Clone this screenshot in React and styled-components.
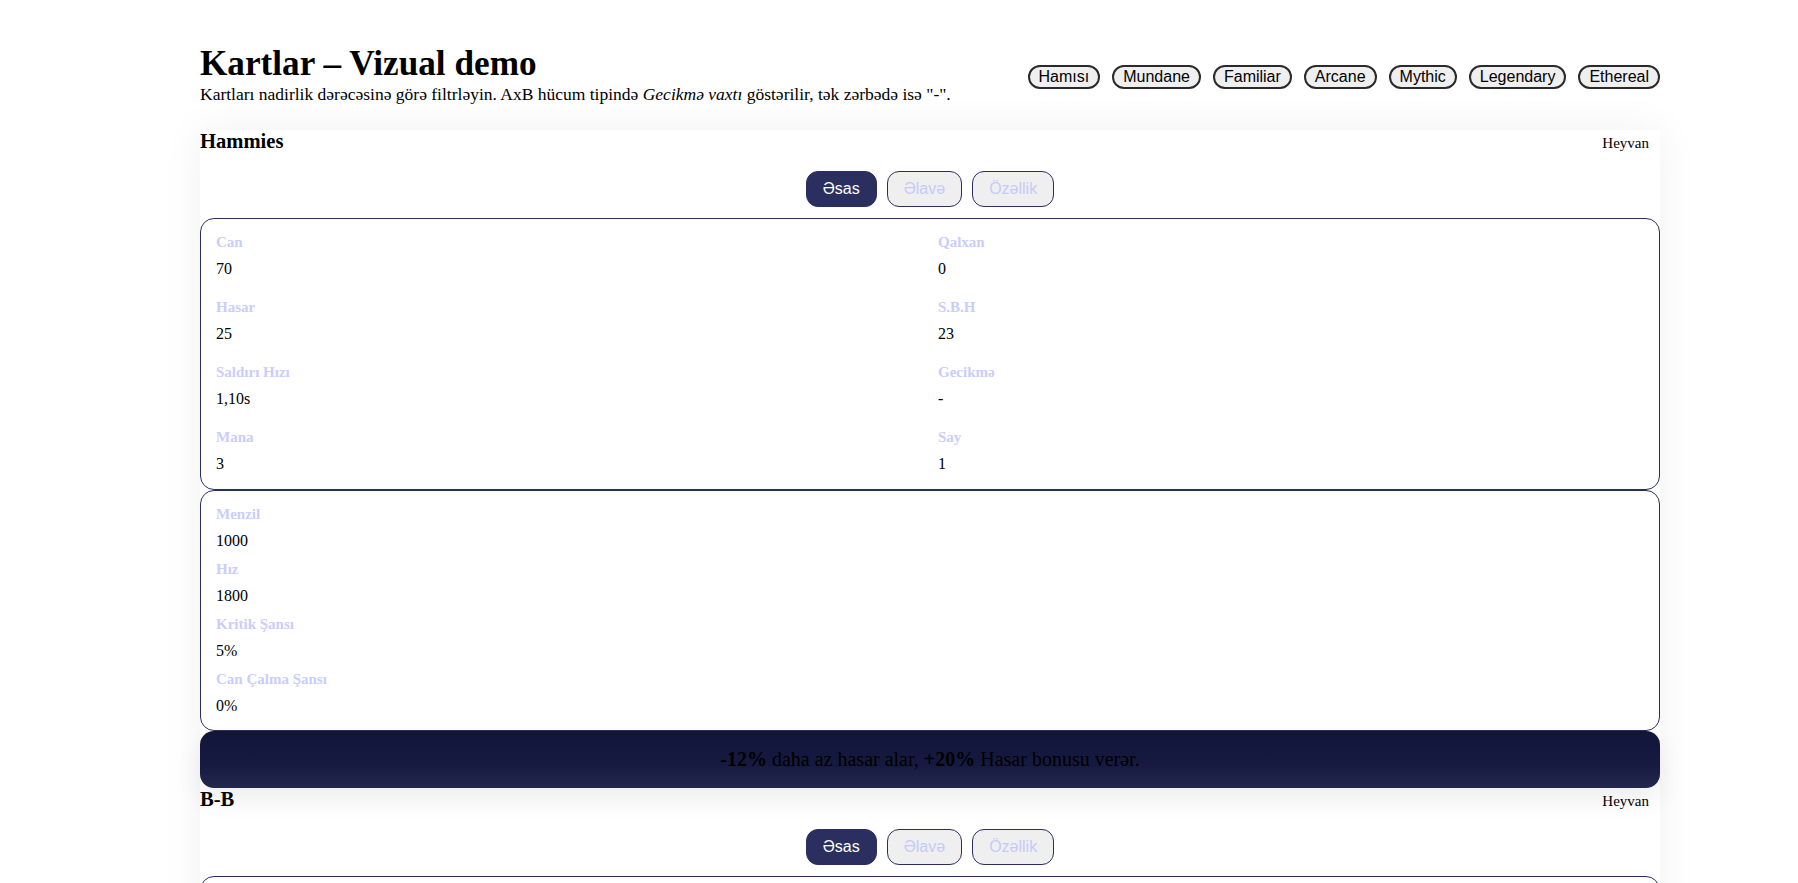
import React, { useState } from 'react';
import styled, { createGlobalStyle, css } from 'styled-components';

const GlobalStyle = createGlobalStyle`
  html, body {
    margin: 0;
    padding: 0;
    background: #fff;
  }
  body {
    font-family: "Liberation Serif", "Times New Roman", serif;
    font-size: 17.6px;
    color: #000;
  }
`;

const navy = '#2b2f60';
const lavender = '#c9cdfb';

const Page = styled.div`
  padding: 44px 0 0 200px;
`;

const Inner = styled.div`
  width: 1460px;
`;

const Header = styled.header`
  display: flex;
  align-items: center;
  justify-content: space-between;
  margin-bottom: 25px;
`;

const Title = styled.h1`
  margin: 0;
  font-size: 35.2px;
  font-weight: 700;
`;

const Lead = styled.p`
  margin: 0;
  font-size: 17.5px;
`;

const Filters = styled.div`
  display: flex;
  gap: 12px;
  margin-top: 4px;
`;

const Pill = styled.button`
  font-family: "Liberation Sans", Arial, sans-serif;
  font-size: 16px;
  line-height: 18px;
  padding: 1px 9px;
  border: 2px solid #2a2a2a;
  border-radius: 12px;
  background: #efefef;
  color: #000;
  cursor: pointer;
`;

const CardList = styled.div`
  background: #fff;
  box-shadow: 0 0 40px rgba(0, 0, 0, 0.06);
`;

const Card = styled.section`
  display: flex;
  flex-direction: column;
`;

const CardHead = styled.div`
  display: flex;
  align-items: baseline;
  justify-content: space-between;
`;

const CardName = styled.h3`
  margin: 0;
  font-size: 20.6px;
  font-weight: 700;
`;

const CardType = styled.span`
  font-size: 15px;
  padding-right: 11px;
`;

const Tabs = styled.div`
  display: flex;
  justify-content: center;
  gap: 10px;
  margin: 18px 0 11px;
`;

const Tab = styled.button`
  font-family: "Liberation Sans", Arial, sans-serif;
  font-size: 16px;
  line-height: 18px;
  padding: 8px 16px;
  border: 1px solid ${navy};
  border-radius: 12px;
  background: #efefef;
  color: #c6cafa;
  cursor: pointer;
  ${(p) => p.$active && css`
    background: ${navy};
    color: #fff;
  `}
`;

const StatBox = styled.div`
  border: 1px solid ${navy};
  border-radius: 14px;
  padding: ${(p) => (p.$grid ? '15px 15px 16px' : '15px 15px 15px')};
  display: ${(p) => (p.$grid ? 'grid' : 'flex')};
  flex-direction: column;
  grid-template-columns: 1fr 1fr;
  gap: ${(p) => (p.$grid ? '21px 16px' : '11px')};
`;

const Stat = styled.div`
  display: flex;
  flex-direction: column;
`;

const StatLabel = styled.span`
  font-size: 15px;
  line-height: 17px;
  font-weight: 700;
  color: ${lavender};
  margin-bottom: 9px;
`;

const StatValue = styled.span`
  font-size: 16px;
  line-height: 18px;
`;

const Bonus = styled.div`
  background: linear-gradient(180deg, #12153a 0%, #171a40 60%, #23274f 100%);
  border-radius: 14px;
  padding: 17px;
  text-align: center;
  font-size: 20px;
  line-height: 23px;
  color: #000;
  box-shadow: 0 12px 26px rgba(0, 0, 0, 0.07);
`;

const rarities = ['Hamısı', 'Mundane', 'Familiar', 'Arcane', 'Mythic', 'Legendary', 'Ethereal'];

const cards = [
  {
    name: 'Hammies',
    type: 'Heyvan',
    main: [
      ['Can', '70'], ['Qalxan', '0'],
      ['Hasar', '25'], ['S.B.H', '23'],
      ['Saldırı Hızı', '1,10s'], ['Gecikmə', '-'],
      ['Mana', '3'], ['Say', '1'],
    ],
    extra: [
      ['Menzil', '1000'], ['Hız', '1800'],
      ['Kritik Şansı', '5%'], ['Can Çalma Şansı', '0%'],
    ],
    bonus: [['-12%', true], [' daha az hasar alar, ', false], ['+20%', true], [' Hasar bonusu verər.', false]],
  },
  {
    name: 'B-B',
    type: 'Heyvan',
    main: [
      ['Can', '120'], ['Qalxan', '0'],
      ['Hasar', '40'], ['S.B.H', '30'],
      ['Saldırı Hızı', '1,30s'], ['Gecikmə', '-'],
      ['Mana', '4'], ['Say', '1'],
    ],
    extra: [
      ['Menzil', '900'], ['Hız', '1600'],
      ['Kritik Şansı', '5%'], ['Can Çalma Şansı', '0%'],
    ],
    bonus: [['+15%', true], [' Can bonusu verər.', false]],
  },
];

const tabNames = ['Əsas', 'Əlavə', 'Özəllik'];

const UnitCard = ({ card }) => {
  const [tab] = useState(0);
  return (
    <Card>
      <CardHead>
        <CardName>{card.name}</CardName>
        <CardType>{card.type}</CardType>
      </CardHead>
      <Tabs>
        {tabNames.map((t, i) => (
          <Tab key={t} $active={i === tab}>{t}</Tab>
        ))}
      </Tabs>
      <StatBox $grid>
        {card.main.map(([label, value]) => (
          <Stat key={label}>
            <StatLabel>{label}</StatLabel>
            <StatValue>{value}</StatValue>
          </Stat>
        ))}
      </StatBox>
      <StatBox>
        {card.extra.map(([label, value]) => (
          <Stat key={label}>
            <StatLabel>{label}</StatLabel>
            <StatValue>{value}</StatValue>
          </Stat>
        ))}
      </StatBox>
      <Bonus>
        {card.bonus.map(([text, strong], i) => (strong ? <b key={i}>{text}</b> : <span key={i}>{text}</span>))}
      </Bonus>
    </Card>
  );
};

const App = () => (
  <>
    <GlobalStyle />
    <Page>
      <Inner>
        <Header>
          <div>
            <Title>Kartlar – Vizual demo</Title>
            <Lead>
              Kartları nadirlik dərəcəsinə görə filtrləyin. AxB hücum tipində <i>Gecikmə vaxtı</i> göstərilir, tək zərbədə isə "-".
            </Lead>
          </div>
          <Filters>
            {rarities.map((r) => (
              <Pill key={r}>{r}</Pill>
            ))}
          </Filters>
        </Header>
        <CardList>
          {cards.map((c) => (
            <UnitCard key={c.name} card={c} />
          ))}
        </CardList>
      </Inner>
    </Page>
  </>
);

export default App;
